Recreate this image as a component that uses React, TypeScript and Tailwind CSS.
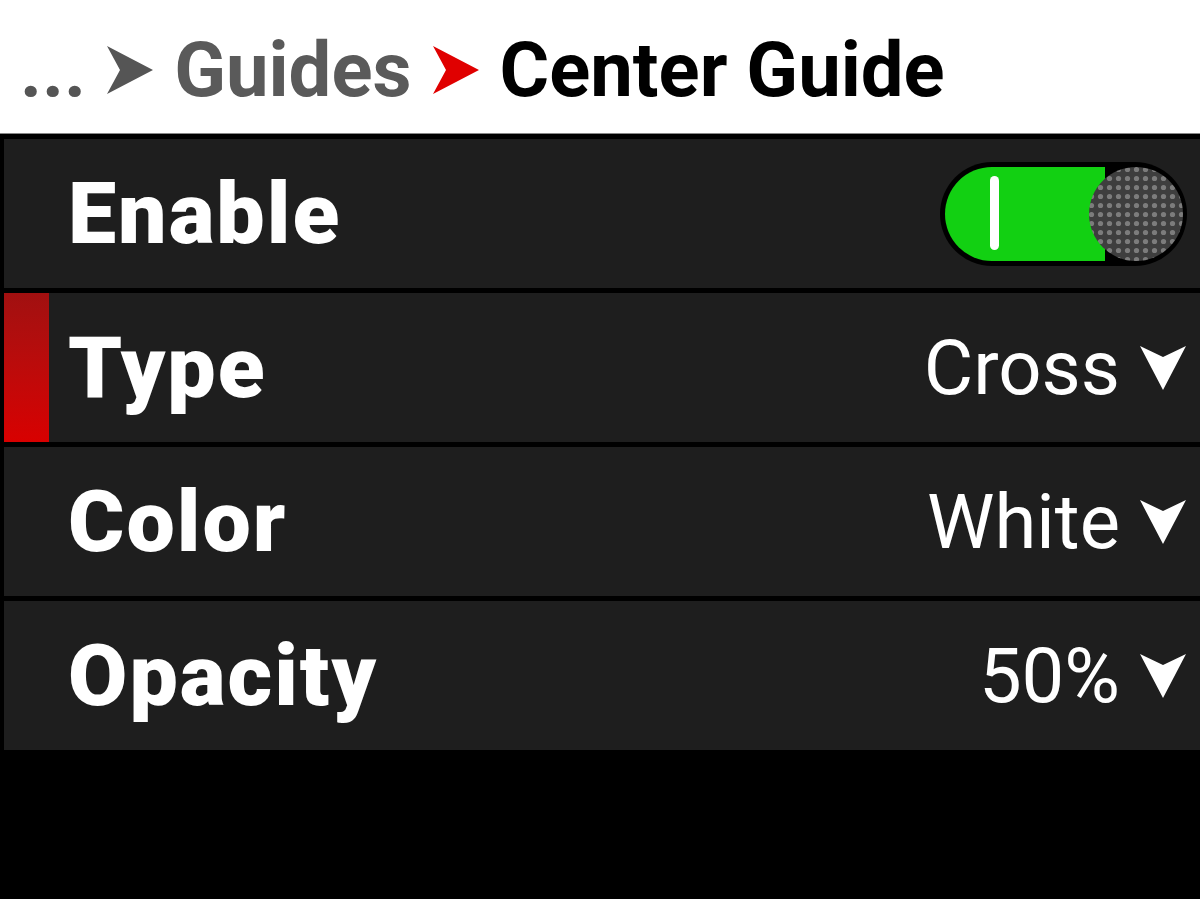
import React from 'react';

function Chevron({ color }: { color: string }) {
  return (
    <svg width="48" height="52" viewBox="0 0 48 52" className="shrink-0">
      <path d="M1 2 L47 26 L1 50 L14 26 Z" fill={color} />
    </svg>
  );
}

function DropArrow() {
  return (
    <svg width="48" height="46" viewBox="0 0 48 46" className="shrink-0">
      <path d="M1 1 L24 12 L47 1 L24 45 Z" fill="#ffffff" />
    </svg>
  );
}

function Toggle() {
  return (
    <div className="relative w-[247px] h-[104px] rounded-full bg-black mr-[13px]">
      <div className="absolute left-[5px] top-[5px] h-[94px] w-[160px] rounded-l-full bg-[#12d012]" />
      <div className="absolute left-[50px] top-[14px] h-[74px] w-[9px] rounded-full bg-white" />
      <svg width="98" height="98" viewBox="0 0 98 98" className="absolute right-[2px] top-[3px]">
        <defs>
          <pattern id="dots" width="9" height="9" patternUnits="userSpaceOnUse">
            <rect width="9" height="9" fill="#3e3e3e" />
            <circle cx="4.5" cy="4.5" r="2.6" fill="#7c7c7c" />
          </pattern>
        </defs>
        <circle cx="49" cy="49" r="47" fill="url(#dots)" />
      </svg>
    </div>
  );
}

function Row({ label, value, selected, toggle }: { label: string; value?: string; selected?: boolean; toggle?: boolean }) {
  return (
    <div className="flex h-[149px] items-center bg-[#1e1e1e] ml-[4px]">
      <div className={selected ? 'w-[45px] self-stretch bg-gradient-to-b from-[#a11010] to-[#d80000]' : 'w-[45px] self-stretch'} />
      <div className="pl-[19px] text-[86px] font-black tracking-[2px] text-white leading-none">{label}</div>
      <div className="flex-1" />
      {toggle ? (
        <Toggle />
      ) : (
        <div className="flex items-center gap-[19px] pr-[13px]">
          <span className="text-[76px] text-white leading-none">{value}</span>
          <DropArrow />
        </div>
      )}
    </div>
  );
}

export default function App() {
  return (
    <div className="w-[1200px] h-[899px] bg-black flex flex-col overflow-hidden" style={{ fontFamily: 'Roboto, "Liberation Sans", sans-serif' }}>
      <div className="h-[134px] bg-white flex items-center pl-[20px] gap-[20px] pt-[6px] border-b border-[#888]">
        <span className="text-[76px] font-bold text-[#555] leading-none">...</span>
        <Chevron color="#555555" />
        <span className="text-[76px] font-bold text-[#5a5a5a] leading-none">Guides</span>
        <Chevron color="#e00000" />
        <span className="text-[76px] font-bold text-black leading-none">Center Guide</span>
      </div>
      <div className="flex flex-col gap-[5px] pt-[5px]">
        <Row label="Enable" toggle />
        <Row label="Type" value="Cross" selected />
        <Row label="Color" value="White" />
        <Row label="Opacity" value="50%" />
      </div>
    </div>
  );
}
